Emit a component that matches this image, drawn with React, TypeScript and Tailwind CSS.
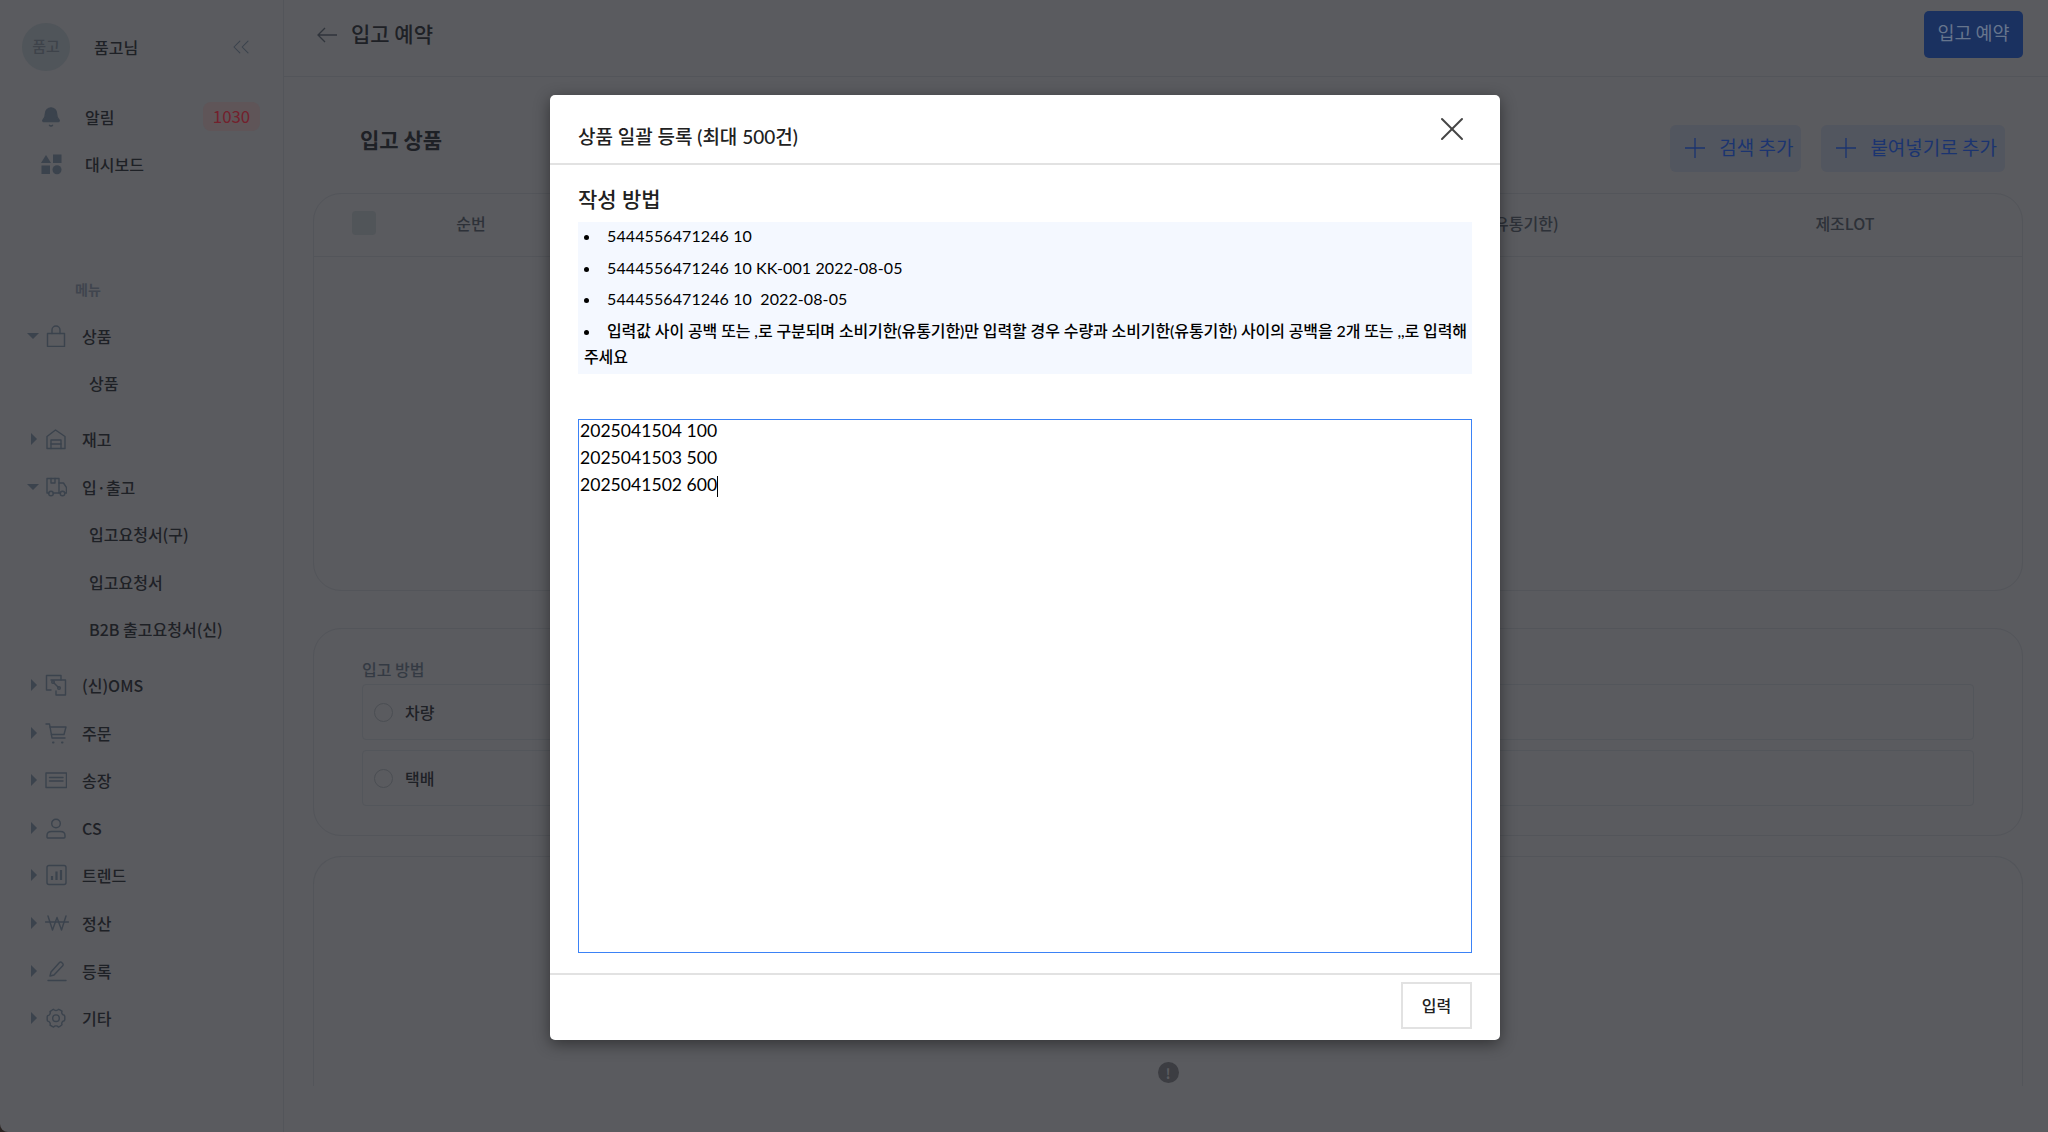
import type { ReactNode } from "react";
import { Bell, ChevronsLeft, X } from "lucide-react";

const ICON = "#3b434d";

function Svg({ children, w = 22, h = 22 }: { children: ReactNode; w?: number; h?: number }) {
  return (
    <svg width={w} height={h} viewBox="0 0 22 22" fill="none" stroke={ICON} strokeWidth={1.4} strokeLinecap="round" strokeLinejoin="round">
      {children}
    </svg>
  );
}

const icons: Record<string, ReactNode> = {
  bag: (
    <Svg>
      <path d="M2.500 8.500h17v13h-17z" />
      <path d="M7 8.500V5a4 4 0 0 1 8 0v3.500" />
    </Svg>
  ),
  house: (
    <Svg>
      <path d="M2 20.500V8.500L10.500 2 20 8.500v12z" />
      <path d="M6 20.500v-8.500h10v8.500" />
      <path d="M6 16h10" />
    </Svg>
  ),
  truck: (
    <Svg>
      <path d="M4 17H2V2.500h12V17H8" />
      <path d="M14 7h4.500l3 4.500V17h-1.500M14 17h1.500" />
      <circle cx="6" cy="17.500" r="2.300" />
      <circle cx="17.500" cy="17.500" r="2.300" />
      <path d="M6 2.500V7h4V2.500" />
    </Svg>
  ),
  oms: (
    <Svg>
      <path d="M16 6V1.500H1.500V16H6" />
      <path d="M6 6h14.500v15H11v-4" />
      <path d="M9 9l4 4" />
      <circle cx="8" cy="8" r="1.300" />
      <circle cx="14" cy="14" r="1.300" />
    </Svg>
  ),
  cart: (
    <Svg>
      <path d="M1 2h3.500l2.500 14h13" />
      <path d="M5 5h16l-2 7.500H6.500" />
      <path d="M8 20.500h.5M17 20.500h.5" strokeWidth={2} />
    </Svg>
  ),
  invoice: (
    <Svg>
      <path d="M1 4h20.500v14.500H1z" />
      <path d="M4.500 8.500h13.500M4.500 12h13.500" />
    </Svg>
  ),
  person: (
    <Svg>
      <circle cx="11" cy="6.500" r="4.300" />
      <path d="M2 20v-1.500c0-2.500 2-4 4.500-4h9c2.500 0 4.500 1.500 4.500 4V20a1 1 0 0 1-1 1H3a1 1 0 0 1-1-1z" />
    </Svg>
  ),
  chart: (
    <Svg>
      <rect x="2" y="1.500" width="19" height="19" rx="2" />
      <path d="M7 16v-4M11.500 16V7.500M16 16V6" strokeWidth={2.200} strokeLinecap="butt" />
    </Svg>
  ),
  won: (
    <svg width="24" height="16" viewBox="0 0 24 16" fill="none" stroke={ICON} strokeWidth={1.4} strokeLinecap="round" strokeLinejoin="round">
      <path d="M3 1l4.500 14L12 2.500 16.500 15 21 1" />
      <path d="M0.500 7h23" />
    </svg>
  ),
  pen: (
    <Svg>
      <path d="M3 20.500h18" />
      <path d="M5 16l1-4L14.500 2.500a1.500 1.500 0 0 1 2.200 0l1 1a1.500 1.500 0 0 1 0 2.200L9 15z" />
    </Svg>
  ),
  gear: (
    <Svg>
      <path d="M8.600 2.300c1.200 1.600 3.600 1.600 4.800 0l1 .4 2.600 1.500c-.8 1.800.4 3.900 2.400 4.100l.4 1.100v3.200l-.4 1.100c-2 .2-3.200 2.300-2.400 4.100L14.400 19.700l-1 .4c-1.200-1.600-3.600-1.600-4.800 0l-1-.4L5 18.200c.8-1.800-.4-3.900-2.400-4.100L2.200 13V9.800l.4-1.100c2-.2 3.200-2.300 2.400-4.100l2.600-1.900z" />
      <circle cx="11" cy="11.200" r="3.300" />
    </Svg>
  ),
};

type NavItem = { label: string; icon: string; open?: boolean; children?: string[] };

const navItems: NavItem[] = [
  { label: "상품", icon: "bag", open: true, children: ["상품"] },
  { label: "재고", icon: "house" },
  { label: "입·출고", icon: "truck", open: true, children: ["입고요청서(구)", "입고요청서", "B2B 출고요청서(신)"] },
  { label: "(신)OMS", icon: "oms" },
  { label: "주문", icon: "cart" },
  { label: "송장", icon: "invoice" },
  { label: "CS", icon: "person" },
  { label: "트렌드", icon: "chart" },
  { label: "정산", icon: "won" },
  { label: "등록", icon: "pen" },
  { label: "기타", icon: "gear" },
];

const guideLines = ["5444556471246 10", "5444556471246 10 KK-001 2022-08-05", "5444556471246 10  2022-08-05"];

function Caret({ open }: { open?: boolean }) {
  return open ? (
    <span className="block h-0 w-0 border-x-[6px] border-t-[6px] border-x-transparent border-t-[#3b434d]" />
  ) : (
    <span className="ml-[4px] block h-0 w-0 border-y-[6px] border-l-[6px] border-y-transparent border-l-[#3b434d]" />
  );
}

function Sidebar() {
  return (
    <aside className="h-full w-[284px] shrink-0 border-r border-[#53555a] text-[16px] font-medium text-[#1e2126]">
      <div className="flex h-[93px] items-center pl-[22px] pr-[28px]">
        <div className="flex h-[48px] w-[48px] items-center justify-center rounded-full bg-[#50555a] text-[15px] font-medium text-[#3e434a]">품고</div>
        <span className="ml-[24px] flex-1">품고님</span>
        <ChevronsLeft size={28} strokeWidth={0.9} color="#3b434d" />
      </div>
      <div className="flex h-[47px] items-center pl-[40px] pr-[23px]">
        <Bell size={22} fill="#3b434d" color="#3b434d" strokeWidth={1.5} />
        <span className="ml-[23px] flex-1">알림</span>
        <span className="flex h-[29px] w-[57px] items-center justify-center rounded-[8px] bg-[#5f5558] text-[16.800px] font-normal text-[#73202c]">1030</span>
      </div>
      <div className="flex h-[47px] items-center pl-[40px]">
        <svg width="22" height="22" viewBox="0 0 22 22" fill="#3b434d">
          <path d="M6 2l5 8H1z" />
          <rect x="13" y="1.500" width="8.500" height="8.500" />
          <rect x="1.500" y="12.500" width="8.500" height="8.500" />
          <circle cx="17" cy="16.800" r="4.500" />
        </svg>
        <span className="ml-[23px]">대시보드</span>
      </div>
      <div className="flex h-[118px] items-end pb-[5px] pl-[75px] text-[14px] font-bold text-[#40454e]">메뉴</div>
      <nav className="pt-[7px]">
        {navItems.map((item) => (
          <div key={item.label + item.icon}>
            <div className="flex h-[47.600px] items-center pl-[27px]">
              <span className="flex w-[18px] shrink-0">
                <Caret open={item.open} />
              </span>
              <span className="flex w-[37px] shrink-0 items-center">{icons[item.icon]}</span>
              <span>{item.label}</span>
            </div>
            {item.children && (
              <div className="pb-[8px]">
                {item.children.map((child) => (
                  <div key={child} className="flex h-[47.600px] items-center pl-[89px]">
                    {child}
                  </div>
                ))}
              </div>
            )}
          </div>
        ))}
      </nav>
    </aside>
  );
}

function OutlineButton({ label }: { label: string }) {
  return (
    <button className="flex h-[47px] items-center gap-[14px] rounded-[6px] bg-[#52565f] pb-[2px] pl-[15px] pr-[8px] text-[19px] text-[#1b3470]">
      <svg width="20" height="20" viewBox="0 0 20 20" stroke="#1b3470" strokeWidth={1.3}>
        <path d="M10 0v20M0 10h20" />
      </svg>
      {label}
    </button>
  );
}

function ShipOption({ label }: { label: string }) {
  return (
    <div className="flex h-[56px] items-center rounded-[4px] border border-[#53565b] pl-[11px]">
      <span className="h-[19px] w-[19px] rounded-full border border-[#4b4e53]" />
      <span className="ml-[12px] font-medium text-[#1e2126]">{label}</span>
    </div>
  );
}

function Main() {
  return (
    <main className="h-full flex-1 text-[16px]">
      <header className="flex h-[77px] items-start justify-between border-b border-[#53555a] pl-[33px] pr-[25px] pt-[11px]">
        <div className="flex h-[47px] items-center gap-[14px]">
          <svg width="20" height="16" viewBox="0 0 20 16" fill="none" stroke="#30353c" strokeWidth={1.3}>
            <path d="M20 8H1M8 1L1 8l7 7" />
          </svg>
          <h1 className="-mt-[2px] text-[21px] font-medium text-[#1e2126]">입고 예약</h1>
        </div>
        <button className="h-[47px] w-[99px] rounded-[5px] bg-[#1a3160] pb-[3px] text-[18.500px] text-[#66758d]">입고 예약</button>
      </header>
      <div className="pl-[29px] pr-[25px]">
        <div className="flex h-[116px] items-start justify-between pr-[18px] pl-[47px] pt-[48px]">
          <h2 className="-mt-[1px] text-[21px] font-semibold text-[#1e2126]">입고 상품</h2>
          <div className="flex gap-[20px]">
            <OutlineButton label="검색 추가" />
            <OutlineButton label="붙여넣기로 추가" />
          </div>
        </div>
        <section className="h-[398px] rounded-[28px] border border-[#53555a]">
          <div className="flex h-[63px] items-center border-b border-[#53555a] pb-[4px] font-medium text-[#2d3138]">
            <div className="w-[100px] shrink-0 pl-[38px]">
              <span className="block h-[24px] w-[24px] rounded-[4px] bg-[#515559]" />
            </div>
            <div className="w-[114px] shrink-0 text-center">순번</div>
            <div className="flex-1" />
            <div className="w-[348px] shrink-0 text-center">소비기한(유통기한)</div>
            <div className="w-[354px] shrink-0 text-center">제조LOT</div>
          </div>
        </section>
        <section className="mt-[37px] h-[208px] rounded-[28px] border border-[#53555a] pl-[48px] pr-[48px] pt-[28px]">
          <label className="mb-[3px] block font-medium leading-[24px] text-[#343a43]">입고 방법</label>
          <div className="flex flex-col gap-[10px]">
            <ShipOption label="차량" />
            <ShipOption label="택배" />
          </div>
        </section>
        <section className="mt-[20px] flex h-[230px] justify-center rounded-t-[28px] border border-b-0 border-[#53555a] pt-[205px]">
          <span className="flex h-[21px] w-[21px] items-center justify-center rounded-full bg-[#3c3d42] text-[14px] font-bold leading-none text-[#5a5b5f]">!</span>
        </section>
      </div>
    </main>
  );
}

function BulkModal() {
  return (
    <div
      className="absolute left-[550px] top-[95px] flex h-[945px] w-[950px] flex-col rounded-[5px] bg-white text-black shadow-[0_4px_16px_rgba(0,0,0,0.45)]"
      style={{ fontFamily: '"Lato", "Noto Sans CJK KR", sans-serif' }}
    >
      <div className="flex h-[70px] shrink-0 items-start justify-between border-b-2 border-[#e2e2e2] pl-[28px] pr-[28px]">
        <h3 className="mt-[30px] text-[19px] font-medium leading-[24px] text-[#212121]">상품 일괄 등록 (최대 500건)</h3>
        <X size={40} strokeWidth={1.2} color="#444" className="mt-[14px]" />
      </div>
      <div className="flex-1 px-[28px]">
        <h4 className="mt-[20px] text-[21px] font-medium leading-[28px] text-[#212121]">작성 방법</h4>
        <ul className="mt-[9px] list-inside list-disc bg-[#f4f8ff] pb-[4px] pl-[6px] pt-[1px] text-[16px] leading-[26px]">
          {guideLines.map((line) => (
            <li key={line} className="mb-[5.500px] whitespace-pre tracking-[0.1px]">
              <span className="ml-[1px]">{line}</span>
            </li>
          ))}
          <li className="font-medium tracking-[-0.1px]">
            <span className="ml-[1px]">입력값 사이 공백 또는 ,로 구분되며 소비기한(유통기한)만 입력할 경우 수량과 소비기한(유통기한) 사이의 공백을 2개 또는 ,,로 입력해 주세요</span>
          </li>
        </ul>
        <div className="mt-[45px] h-[534px] overflow-hidden border border-[#3b82f6] px-[1px] text-[17.600px] leading-[27px]">
          <div className="-mt-[3px]">2025041504 100</div>
          <div>2025041503 500</div>
          <div>
            2025041502 600
            <span className="inline-block h-[21px] w-px bg-black align-middle" />
          </div>
        </div>
      </div>
      <div className="flex h-[67px] shrink-0 justify-end border-t-2 border-[#e2e2e2] pr-[28px] pt-[7px]">
        <button className="h-[47px] w-[71px] border-2 border-[#e2e2e2] text-[16px] font-medium text-[#212121]">입력</button>
      </div>
    </div>
  );
}

export default function App() {
  return (
    <div className="relative h-[1132px] w-[2048px] overflow-hidden bg-[#2a2422]" style={{ fontFamily: '"Noto Sans CJK KR", sans-serif' }}>
      <div className="flex h-full rounded-bl-[8px] bg-[#5a5b5f]">
        <Sidebar />
        <Main />
      </div>
      <BulkModal />
    </div>
  );
}
